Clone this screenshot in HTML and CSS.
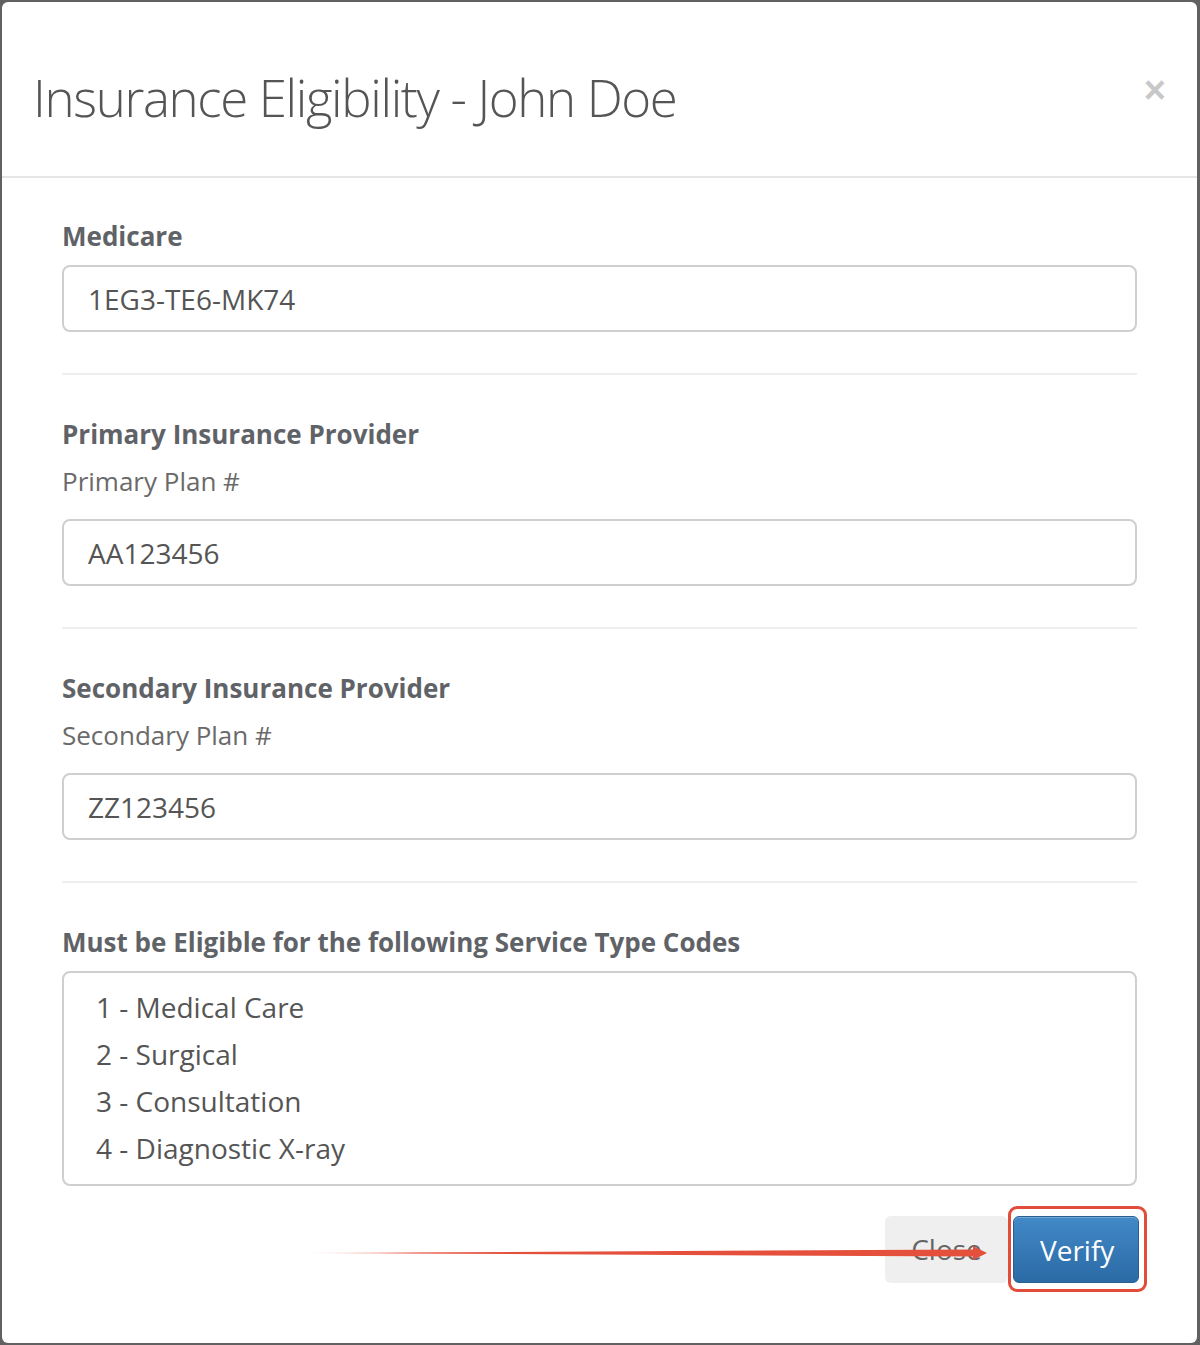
FILE: index.html
```html
<!DOCTYPE html>
<html>
<head>
<meta charset="utf-8">
<title>Insurance Eligibility</title>
<link rel="stylesheet" href="styles.css">
</head>
<body>
<div class="modal">
  <div class="modal-header">
    <h1 class="modal-title">Insurance Eligibility - John Doe</h1>
    <span class="close">&times;</span>
  </div>
  <div class="modal-body">
    <div class="section">
      <div class="label">Medicare</div>
      <div class="input">1EG3-TE6-MK74</div>
    </div>
    <hr class="divider">
    <div class="section">
      <div class="label">Primary Insurance Provider</div>
      <div class="sublabel">Primary Plan #</div>
      <div class="input">AA123456</div>
    </div>
    <hr class="divider">
    <div class="section">
      <div class="label">Secondary Insurance Provider</div>
      <div class="sublabel">Secondary Plan #</div>
      <div class="input">ZZ123456</div>
    </div>
    <hr class="divider">
    <div class="section">
      <div class="label">Must be Eligible for the following Service Type Codes</div>
      <ul class="codes">
        <li>1 - Medical Care</li>
        <li>2 - Surgical</li>
        <li>3 - Consultation</li>
        <li>4 - Diagnostic X-ray</li>
      </ul>
    </div>
  </div>
  <div class="modal-footer">
    <button class="btn btn-default">Close</button>
    <span class="highlight"><button class="btn btn-primary">Verify</button></span>
    <svg class="arrow" width="700" height="20" viewBox="0 0 700 20">
      <defs>
        <linearGradient id="fade" x1="0" y1="0" x2="1" y2="0">
          <stop offset="0" stop-color="#e5503c" stop-opacity="0"/>
          <stop offset="0.18" stop-color="#e5503c" stop-opacity="1"/>
          <stop offset="1" stop-color="#e5503c" stop-opacity="1"/>
        </linearGradient>
      </defs>
      <path d="M0 10 L680 6.5 L680 13.5 Z" fill="url(#fade)"/>
      <path d="M678 3 L692 10 L678 17 Z" fill="#e5503c"/>
    </svg>
  </div>
</div>
</body>
</html>
```
FILE: styles.css
```css
html, body {
  margin: 0;
  padding: 0;
}
body {
  background: #616161;
  width: 1200px;
  height: 1345px;
  overflow: hidden;
  font-family: "Open Sans", "Noto Sans", sans-serif;
}
.modal {
  margin: 2px 3px 2px 2px;
  height: 1341px;
  background: #fff;
  border-radius: 6px;
  box-sizing: border-box;
  position: relative;
}
.modal-header {
  height: 174px;
  border-bottom: 2px solid #e5e5e5;
  padding: 0 31px;
  display: flex;
  align-items: center;
  justify-content: space-between;
}
.modal-title {
  margin: 16px 0 0 0;
  font-weight: 300;
  font-size: 51px;
  color: #555;
  letter-spacing: -1.35px;
}
.close {
  align-self: flex-start;
  margin-top: 69px;
  margin-right: 0;
  font-size: 38px;
  font-weight: 700;
  color: #c8c8c8;
  line-height: 1;
  font-family: "Liberation Sans", sans-serif;
}
.modal-body {
  padding: 40px 60px 0;
}
.label {
  font-size: 26px;
  font-weight: 700;
  line-height: 36px;
  color: #5f6367;
}
.sublabel {
  font-size: 26px;
  line-height: 36px;
  color: #6a6a6a;
  margin-top: 11px;
}
.input {
  margin-top: 11px;
  height: 67px;
  box-sizing: border-box;
  border: 2px solid #cfcfcf;
  border-radius: 8px;
  padding: 0 24px;
  display: flex;
  align-items: center;
  font-size: 28px;
  color: #555;
}
.sublabel + .input {
  margin-top: 20px;
}
.divider {
  border: 0;
  border-top: 2px solid #eee;
  margin: 41px 0 41px 0;
}
.codes {
  list-style: none;
  margin: 11px 0 0 0;
  padding: 11px 32px 10px;
  border: 2px solid #cfcfcf;
  border-radius: 8px;
  height: 215px;
  box-sizing: border-box;
}
.codes li {
  font-size: 28px;
  line-height: 47px;
  color: #555;
}
.modal-footer {
  position: relative;
  display: flex;
  justify-content: flex-end;
  align-items: center;
  padding: 0 60px;
  margin-top: 20px;
}
.btn {
  height: 67px;
  border: 0;
  border-radius: 6px;
  font-family: "Open Sans", "Noto Sans", sans-serif;
  font-size: 28px;
  padding: 0 26px;
  cursor: pointer;
}
.btn-default {
  background: #efefef;
  color: #666;
  width: 123px;
}
.highlight {
  display: inline-flex;
  border: 3px solid #e24c3b;
  border-radius: 9px;
  padding: 7px 5px 6px 2px;
  margin: 0 -10px 0 0;
}
.btn-primary {
  width: 126px;
  color: #fff;
  background: linear-gradient(#4289c8, #2b6aa5);
  border: 1px solid #285f91;
  box-shadow: inset 0 1px 0 rgba(255,255,255,0.25);
}
.arrow {
  position: absolute;
  left: 293px;
  top: 37px;
}
```
